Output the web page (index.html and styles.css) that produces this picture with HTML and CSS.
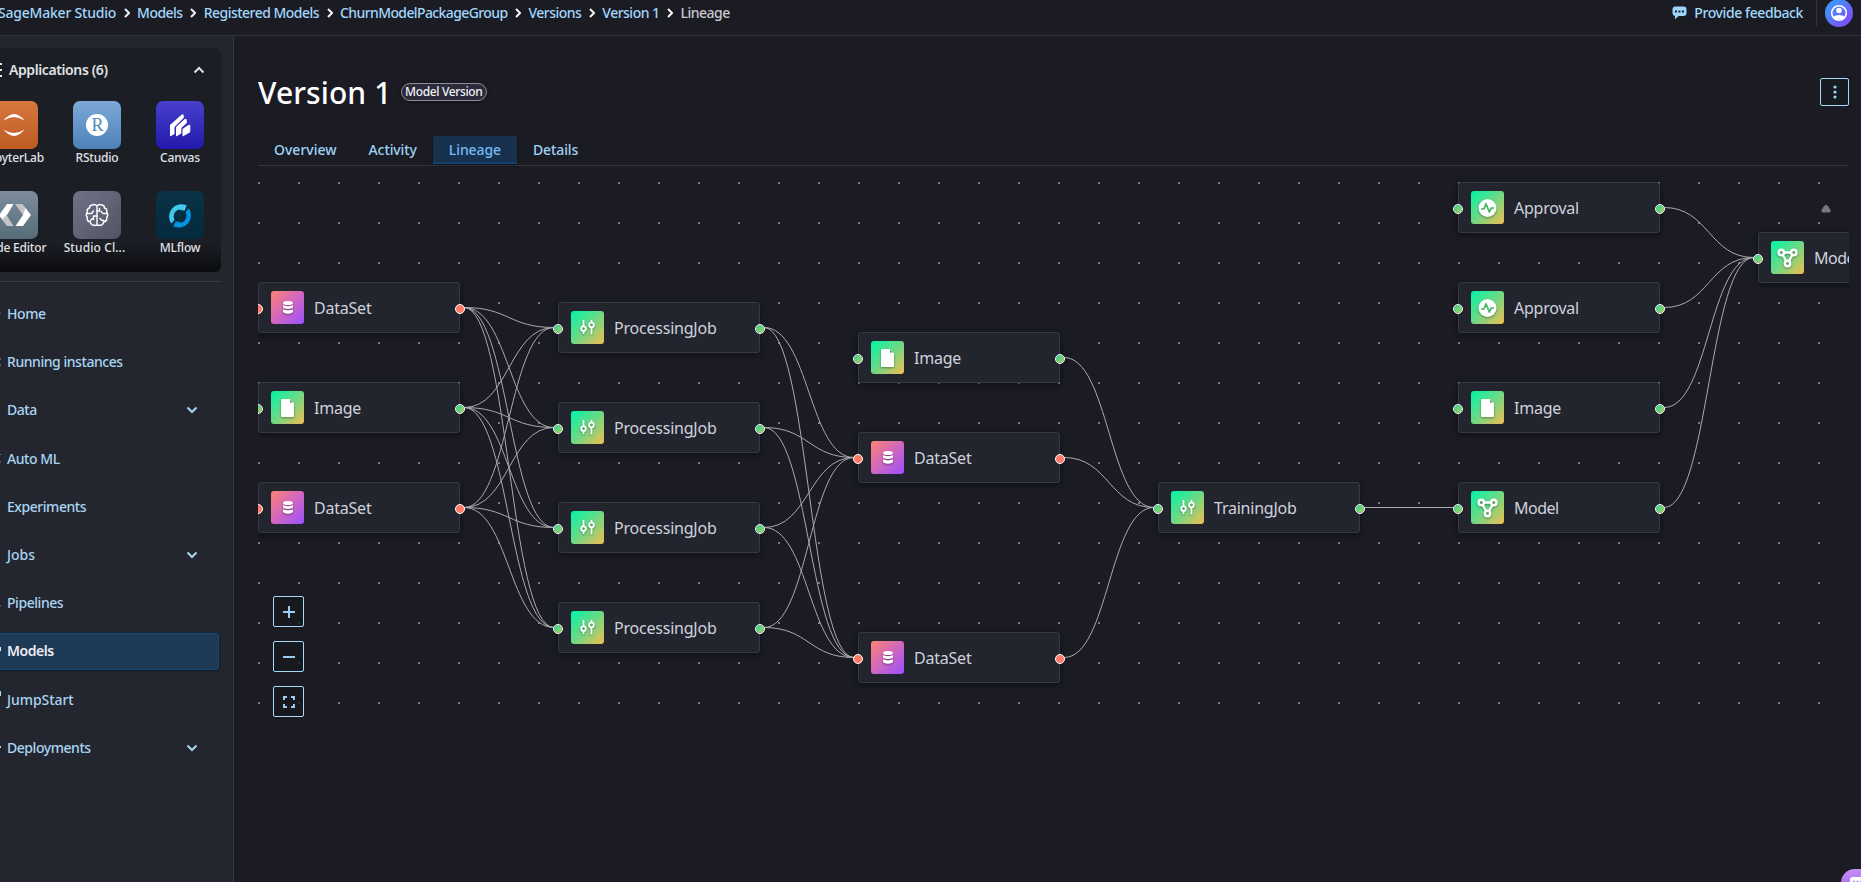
FILE: index.html
```html
<!DOCTYPE html>
<html lang="en">
<head>
<meta charset="utf-8">
<title>SageMaker Studio - Lineage</title>
<link rel="stylesheet" href="styles.css">
</head>
<body>
<svg class="defs" aria-hidden="true">
  <defs>
    <symbol id="chev-right" viewBox="0 0 6 10"><path d="M1 1l4 4-4 4" fill="none" stroke="currentColor" stroke-width="2"/></symbol>
    <symbol id="chev-down" viewBox="0 0 12 8"><path d="M1.5 1.5L6 6l4.500-4.500" fill="none" stroke="currentColor" stroke-width="2"/></symbol>
    <symbol id="i-job" viewBox="0 0 33 33"><g fill="none" stroke="#fff" stroke-width="1.800"><path d="M12.500 9v6M12.500 20.500V23M20.500 9v2.500M20.500 17v6.500"/><circle cx="12.500" cy="17.700" r="2.300"/><circle cx="20.500" cy="14" r="2.300"/></g></symbol>
    <symbol id="i-data" viewBox="0 0 33 33"><g fill="#fff"><ellipse cx="17" cy="12" rx="5" ry="2.100"/><path d="M12 14c1.500 1.500 8.500 1.500 10 0v2.300c-1 2.200-9 2.200-10 0zM12 18.300c1.500 1.500 8.500 1.500 10 0v2.400c-1 2.600-9 2.600-10 0z"/></g></symbol>
    <symbol id="i-image" viewBox="0 0 33 33"><path d="M11 8h7.800l4.200 4.200V25a1 1 0 0 1-1 1H11a1 1 0 0 1-1-1V9a1 1 0 0 1 1-1z" fill="#fff"/><path d="M19 9v2.500h2.500z" fill="#1e8a4c"/></symbol>
    <symbol id="i-approval" viewBox="0 0 33 33"><circle cx="16.500" cy="17" r="9" fill="#fff"/><path d="M10 18h3l2-5.300 3.300 8.300 2-4h2.700" fill="none" stroke="#45b862" stroke-width="1.700" stroke-linejoin="round"/></symbol>
    <symbol id="i-model" viewBox="0 0 33 33"><g fill="none" stroke="#fff" stroke-width="2.400"><circle cx="10.300" cy="11.500" r="2.700"/><circle cx="22.800" cy="11.500" r="2.700"/><circle cx="16.500" cy="22.500" r="2.700"/><path d="M13 11.500h7M11.700 14l3.500 6M21.400 14l-3.500 6"/></g></symbol>
  </defs>
</svg>

<header class="topbar">
  <nav class="crumbs">
    <a class="root">SageMaker Studio</a><svg class="sep"><use href="#chev-right"/></svg>
    <a>Models</a><svg class="sep"><use href="#chev-right"/></svg>
    <a>Registered Models</a><svg class="sep"><use href="#chev-right"/></svg>
    <a class="group">ChurnModelPackageGroup</a><svg class="sep"><use href="#chev-right"/></svg>
    <a>Versions</a><svg class="sep"><use href="#chev-right"/></svg>
    <a>Version 1</a><svg class="sep"><use href="#chev-right"/></svg>
    <span class="here">Lineage</span>
  </nav>
  <div class="feedback">
    <svg width="15" height="14" viewBox="0 0 15 14"><path d="M3.500.5h8a3 3 0 0 1 3 3V7a3 3 0 0 1-3 3H6.500L3 13.300V10A3 3 0 0 1 .5 7V3.500a3 3 0 0 1 3-3z" fill="#9bd6fb"/><g fill="#1a1b23"><rect x="3" y="4.500" width="2" height="2"/><rect x="6.500" y="4.500" width="2" height="2"/><rect x="10" y="4.500" width="2" height="2"/></g></svg>
    <span>Provide feedback</span>
  </div>
  <div class="avatar">
    <svg width="18" height="18" viewBox="0 0 18 18"><circle cx="9" cy="9" r="7.300" fill="none" stroke="#fff" stroke-width="1.600"/><circle cx="9" cy="6.500" r="2.800" fill="#fff"/><path d="M3.500 13.300c1.500-3 9.500-3 11 0l-2.500 2.200H6z" fill="#fff"/></svg>
  </div>
</header>

<div class="body">
  <aside class="sidebar">
    <section class="apps">
      <div class="apps-head">
        <svg class="list-dots" width="3" height="16" viewBox="0 0 3 16"><path d="M0 2h2M0 8h2M0 14h2" stroke="#e6e6ea" stroke-width="2"/></svg>
        <span>Applications (6)</span>
        <svg class="fold" width="12" height="8"><use href="#chev-down"/></svg>
      </div>
      <div class="tiles">
        <div class="app">
          <svg class="tile jupyter" viewBox="0 0 48 48"><path d="M13.500 19.500Q24 6.500 34.500 19.500 24 12.500 13.500 19.500zM13.500 28.500Q24 41.500 34.500 28.500 24 35.500 13.500 28.500z" fill="#fff"/></svg>
          <span>JupyterLab</span>
        </div>
        <div class="app">
          <svg class="tile rstudio" viewBox="0 0 48 48"><circle cx="24" cy="24" r="11" fill="#fff"/><text x="24.500" y="30" class="r-mark">R</text></svg>
          <span>RStudio</span>
        </div>
        <div class="app">
          <svg class="tile canvas-app" viewBox="0 0 48 48"><path d="M14 24l11-9.800q2.800-2.200 2.800 1v1.600L19.500 25q-1 1-1 2v6L15 35q-1 .5-1-.5zM20 27q0-1 1-2l7.200-6.500q2.600-1.700 2.600 1V22l-4.500 4q-1 1-1 2v4.500L21 35q-1 .5-1-.5zM26.500 29q0-1 1-1.700l4.800-3.300q2-1 2 1v5q0 1-1 1.700L27.500 35q-1 .5-1-.5z" fill="#fff"/></svg>
          <span>Canvas</span>
        </div>
        <div class="app">
          <svg class="tile code" viewBox="0 0 48 48"><path d="M23.500 13h-6.500L9 24l4 5.500 4-5.500z" fill="#fff"/><path d="M16.500 24l7 11H17l-5-6.500z" fill="#c4c4c8"/><path d="M25 13h7.500l5 6.500L33 24z" fill="#c4c4c8"/><path d="M35.500 17l5.500 7-8 11h-7.500l7.500-11z" fill="#fff"/></svg>
          <span>Code Editor</span>
        </div>
        <div class="app">
          <svg class="tile classic" viewBox="0 0 48 48"><g fill="none" stroke="#fff" stroke-width="1.400" stroke-linecap="round" stroke-linejoin="round"><path d="M24 15q-2-2.500-4.500-1-3 0-3 3-3.200 1-2.200 4.200-2 2.800 0 5.300-.5 4 3 4.500 1 4 4.500 3 1.500 1.200 2.200-.7zM24 15q2-2.500 4.500-1 3 0 3 3 3.200 1 2.200 4.200 2 2.800 0 5.300.5 4-3 4.500-1 4-4.500 3-1.500 1.200-2.200-.7"/><path d="M14.500 22.500h4l2-2.500M24 25h-3.500v3.500M17.500 29.500l2-2M33.500 22.500H30l-2-2M24 20h2.500v-2.500M27 27.500l2 2h2"/></g></svg>
          <span class="clipped-name">Studio Cl...</span>
        </div>
        <div class="app">
          <svg class="tile mlflow" viewBox="0 0 48 48"><path d="M15.200 32.500A12.300 12.300 0 0 1 30.300 14.300L31 13.800 28.500 19.800 22.500 18.400A7.500 7.500 0 0 0 18.500 29z" fill="#43c9ed"/><path d="M33 17.500A12.300 12.300 0 0 1 17.800 35.500L17 36 19.800 30.300 25.700 31.800A7.500 7.500 0 0 0 29.500 21z" fill="#0194e2"/></svg>
          <span>MLflow</span>
        </div>
      </div>
    </section>
    <nav class="menu">
      <a class="item"><svg class="frag" viewBox="0 0 2 16"><path d="M0 7h1" stroke="currentColor" opacity=".4"/></svg>Home</a>
      <a class="item"><svg class="frag" viewBox="0 0 2 16"><path d="M0 5h1M0 11h1" stroke="currentColor" opacity=".7"/></svg>Running instances</a>
      <a class="item">Data<svg class="fold"><use href="#chev-down"/></svg></a>
      <a class="item"><svg class="frag" viewBox="0 0 2 16"><path d="M0 4.500h1M0 12h1" stroke="currentColor" opacity=".5"/></svg>Auto ML</a>
      <a class="item">Experiments</a>
      <a class="item loose">Jobs<svg class="fold"><use href="#chev-down"/></svg></a>
      <a class="item"><svg class="frag" viewBox="0 0 2 16"><path d="M0 11h1" stroke="currentColor" opacity=".5"/></svg>Pipelines</a>
      <a class="item current"><svg class="frag" viewBox="0 0 2 16"><path d="M.5 3v4" stroke="currentColor"/></svg>Models</a>
      <a class="item loose"><svg class="frag" viewBox="0 0 2 16"><path d="M.5 0v5" stroke="currentColor"/></svg>JumpStart</a>
      <a class="item"><svg class="frag" viewBox="0 0 2 16"><path d="M0 8h1" stroke="currentColor" stroke-width="2"/></svg>Deployments<svg class="fold"><use href="#chev-down"/></svg></a>
    </nav>
  </aside>

  <main class="main">
    <div class="title-row">
      <h1>Version 1</h1>
      <span class="badge">Model Version</span>
      <button class="kebab" aria-label="Actions"><svg width="4" height="14" viewBox="0 0 4 14"><g fill="#9bd6fb"><circle cx="2" cy="2" r="1.600"/><circle cx="2" cy="7" r="1.600"/><circle cx="2" cy="12" r="1.600"/></g></svg></button>
    </div>
    <nav class="tabs">
      <a class="tab">Overview</a>
      <a class="tab">Activity</a>
      <a class="tab active">Lineage</a>
      <a class="tab">Details</a>
    </nav>

    <div class="graph">
      <svg class="layer" width="1591" height="560">
        <defs><pattern id="dots" width="40" height="40" y="16" patternUnits="userSpaceOnUse"><rect width="2" height="2" fill="#797a83"/></pattern></defs>
        <rect width="1591" height="560" fill="url(#dots)"/>
        <g class="edges">
          <path d="M206 141.500C251 141.500 251 161.500 296 161.500"/>
          <path d="M206 141.500C251 141.500 251 261.500 296 261.500"/>
          <path d="M206 141.500C251 141.500 251 361.500 296 361.500"/>
          <path d="M206 141.500C251 141.500 251 461.500 296 461.500"/>
          <path d="M206 241.500C251 241.500 251 161.500 296 161.500"/>
          <path d="M206 241.500C251 241.500 251 261.500 296 261.500"/>
          <path d="M206 241.500C251 241.500 251 361.500 296 361.500"/>
          <path d="M206 241.500C251 241.500 251 461.500 296 461.500"/>
          <path d="M206 341.500C251 341.500 251 161.500 296 161.500"/>
          <path d="M206 341.500C251 341.500 251 261.500 296 261.500"/>
          <path d="M206 341.500C251 341.500 251 361.500 296 361.500"/>
          <path d="M206 341.500C251 341.500 251 461.500 296 461.500"/>
          <path d="M506 161.500C551 161.500 551 291.500 596 291.500"/>
          <path d="M506 161.500C551 161.500 551 491.500 596 491.500"/>
          <path d="M506 261.500C551 261.500 551 291.500 596 291.500"/>
          <path d="M506 261.500C551 261.500 551 491.500 596 491.500"/>
          <path d="M506 361.500C551 361.500 551 291.500 596 291.500"/>
          <path d="M506 361.500C551 361.500 551 491.500 596 491.500"/>
          <path d="M506 461.500C551 461.500 551 291.500 596 291.500"/>
          <path d="M506 461.500C551 461.500 551 491.500 596 491.500"/>
          <path d="M806 191.500C851 191.500 851 341.500 896 341.500"/>
          <path d="M806 291.500C851 291.500 851 341.500 896 341.500"/>
          <path d="M806 491.500C851 491.500 851 341.500 896 341.500"/>
          <path d="M1106 341.500H1196"/>
          <path d="M1406 41.500C1451 41.500 1451 91.500 1496 91.500"/>
          <path d="M1406 141.500C1451 141.500 1451 91.500 1496 91.500"/>
          <path d="M1406 241.500C1451 241.500 1451 91.500 1496 91.500"/>
          <path d="M1406 341.500C1451 341.500 1451 91.500 1496 91.500"/>
        </g>
      </svg>

      <div class="node data" style="left:0;top:116px"><svg><use href="#i-data"/></svg>DataSet</div>
      <div class="node" style="left:0;top:216px"><svg><use href="#i-image"/></svg>Image</div>
      <div class="node data" style="left:0;top:316px"><svg><use href="#i-data"/></svg>DataSet</div>
      <div class="node" style="left:300px;top:136px"><svg><use href="#i-job"/></svg>ProcessingJob</div>
      <div class="node" style="left:300px;top:236px"><svg><use href="#i-job"/></svg>ProcessingJob</div>
      <div class="node" style="left:300px;top:336px"><svg><use href="#i-job"/></svg>ProcessingJob</div>
      <div class="node" style="left:300px;top:436px"><svg><use href="#i-job"/></svg>ProcessingJob</div>
      <div class="node" style="left:600px;top:166px"><svg><use href="#i-image"/></svg>Image</div>
      <div class="node data" style="left:600px;top:266px"><svg><use href="#i-data"/></svg>DataSet</div>
      <div class="node data" style="left:600px;top:466px"><svg><use href="#i-data"/></svg>DataSet</div>
      <div class="node" style="left:900px;top:316px"><svg><use href="#i-job"/></svg>TrainingJob</div>
      <div class="node" style="left:1200px;top:16px"><svg><use href="#i-approval"/></svg>Approval</div>
      <div class="node" style="left:1200px;top:116px"><svg><use href="#i-approval"/></svg>Approval</div>
      <div class="node" style="left:1200px;top:216px"><svg><use href="#i-image"/></svg>Image</div>
      <div class="node model" style="left:1200px;top:316px"><svg><use href="#i-model"/></svg>Model</div>
      <div class="node model" style="left:1500px;top:66px"><svg><use href="#i-model"/></svg>Model</div>

      <svg class="marker" width="10" height="8" viewBox="0 0 10 8"><path d="M4 .5h2L9 5v2H1V5z" fill="#77777c" stroke="#77777c" stroke-linejoin="round"/></svg>

      <div class="zoomer">
        <button aria-label="Zoom in"><svg viewBox="0 0 12 12"><path d="M6 0v12M0 6h12"/></svg></button>
        <button aria-label="Zoom out"><svg viewBox="0 0 12 12"><path d="M0 6h12"/></svg></button>
        <button aria-label="Fit view"><svg viewBox="0 0 12 12"><path d="M1 4V1h3M8 1h3v3M11 8v3H8M4 11H1V8"/></svg></button>
      </div>
    </div>
  </main>
</div>

<div class="assistant"><svg width="20" height="14" viewBox="0 0 20 14"><rect width="20" height="14" rx="3" fill="#fff"/><g fill="#b57ff0"><circle cx="4" cy="4.500" r="1"/><circle cx="7.500" cy="4.500" r="1"/><circle cx="11" cy="4.500" r="1"/></g></svg></div>
</body>
</html>
```
FILE: styles.css
```css
* { box-sizing: border-box; }
body {
  margin: 0;
  height: 882px;
  overflow: hidden;
  display: flex;
  flex-direction: column;
  background: #1b1b24;
  color: #d5d8de;
  font: 500 14px/20px "Noto Sans", "Open Sans", sans-serif;
}
.defs { position: absolute; width: 0; height: 0; }
svg { flex: none; display: block; }
button { font: inherit; padding: 0; }

.topbar {
  height: 36px;
  flex: none;
  display: flex;
  align-items: flex-start;
  border-bottom: 1px solid #33343e;
}
.crumbs {
  display: flex;
  align-items: center;
  gap: 7.5px;
  height: 26px;
  margin-left: -2px;
  flex: 1;
  color: #a0d6fa;
  letter-spacing: -.52px;
  white-space: nowrap;
}
.crumbs .root { letter-spacing: -.22px; }
.crumbs .group { letter-spacing: -.61px; }
.sep { width: 6px; height: 10px; color: #f2f3f3; }
.here { color: #c9c7cf; }
.feedback {
  display: flex;
  align-items: center;
  gap: 7px;
  height: 26px;
  color: #a0d8fc;
  letter-spacing: -.4px;
  padding-right: 13px;
  border-right: 1px solid #33343e;
}
.avatar {
  width: 28px;
  height: 28px;
  margin: -1px 8px 0;
  border-radius: 50%;
  background: linear-gradient(135deg, #2ea8ff, #8b3df5);
  display: flex;
  align-items: center;
  justify-content: center;
}

.body { flex: 1; display: flex; min-height: 0; }
.sidebar {
  width: 234px;
  flex: none;
  padding-top: 12px;
  background: #23262f;
  border-right: 1px solid #35373f;
}
.apps {
  width: 221px;
  height: 224px;
  overflow: hidden;
  border-radius: 0 6px 6px 0;
  background: linear-gradient(#0000 195px, #0b0c0f), #1b1e25;
  color: #e0e1e5;
}
.apps-head {
  display: flex;
  align-items: center;
  height: 44px;
  padding-right: 16px;
  font-weight: 600;
  letter-spacing: -.4px;
}
.list-dots { margin-right: 6px; }
.fold { width: 12px; height: 8px; margin-left: auto; }
.apps-head .fold { transform: rotate(180deg); }
.tiles {
  display: grid;
  grid-template-columns: repeat(3, 83px);
  grid-auto-rows: 90px;
  margin: 9px 0 0 -27.500px;
}
.app {
  display: flex;
  flex-direction: column;
  align-items: center;
  font-size: 12px;
  line-height: 18px;
  letter-spacing: -.2px;
}
.clipped-name { letter-spacing: .1px; margin-right: 5px; }
.tile { width: 48px; height: 48px; border-radius: 7px; }
.jupyter { background: linear-gradient(#d87640, #bf5c24); }
.rstudio { background: linear-gradient(#7ea8d8, #4c82b8); }
.canvas-app { background: linear-gradient(#4840cc, #2219ac); }
.code { background: linear-gradient(#7c8c9e, #576c77); }
.classic { background: linear-gradient(135deg, #70728a, #525462); }
.mlflow { background: linear-gradient(#093246, #042a3d); }
.r-mark { font: 18px "Liberation Serif", serif; fill: #5488bd; text-anchor: middle; }
.menu {
  display: flex;
  flex-direction: column;
  gap: 11.200px;
  width: 221px;
  margin-top: 9px;
  padding: 13.500px 2px 0 0;
  border-top: 1px solid #3a3c46;
}
.item {
  position: relative;
  display: flex;
  align-items: center;
  height: 37px;
  padding: 0 21px 0 7px;
  color: #a9d4f2;
  letter-spacing: -.45px;
}
.item.loose { letter-spacing: -.05px; }
.item.current {
  background: #1e3a57;
  border: 1px solid #144a7c;
  border-left: 0;
  border-radius: 0 4px 4px 0;
  box-shadow: 0 1px 3px #0006;
  color: #ececf2;
  font-weight: 600;
}
.frag { position: absolute; left: 0; top: 10px; width: 2px; height: 16px; }

.main { flex: 1; min-width: 0; padding: 42px 12px 0 24px; }
.title-row { display: flex; align-items: center; height: 28px; }
h1 { margin: 0; width: 130px; padding-top: 2px; font-size: 30px; line-height: 28px; font-weight: 500; letter-spacing: .1px; white-space: nowrap; color: #fff; }
.badge {
  height: 18px;
  margin-left: 13px;
  padding: 0 3px;
  border: 1px solid #8c8c99;
  border-radius: 9px;
  background: #2b2b3a;
  box-shadow: 0 1px 4px #0006;
  color: #f0f0f5;
  font-size: 12px;
  line-height: 16px;
  letter-spacing: -.35px;
}
.kebab {
  display: flex;
  align-items: center;
  justify-content: center;
  width: 29px;
  height: 28px;
  margin-left: auto;
  border: 1px solid #a5d9fa;
  border-radius: 2px;
  background: #191b22;
}
.tabs {
  display: flex;
  height: 30px;
  margin-top: 30px;
  border-bottom: 1px solid #33343e;
}
.tab { height: 28px; padding: 0 16px; line-height: 28px; color: #9fd3f8; }
.tab:nth-child(n+2) { letter-spacing: -.1px; }
.tab.active {
  background: #18314e;
  border-bottom: 2px solid #12436e;
  border-radius: 2px 2px 0 0;
  box-shadow: 0 1px 3px #0005;
  color: #75bcf5;
}

.graph { position: relative; height: 560px; overflow: hidden; }
.layer { position: absolute; left: 0; top: 0; }
.edges { fill: none; stroke: #a9a9ae; stroke-width: 1; }
.node {
  position: absolute;
  display: flex;
  align-items: center;
  gap: 10px;
  width: 202px;
  height: 51px;
  padding-left: 12px;
  background: #22252e;
  border: 1px solid #363945;
  border-radius: 3px;
  box-shadow: 0 2px 6px #0007;
  color: #d0d1dd;
  font-size: 16px;
  font-weight: 400;
  letter-spacing: -.22px;
}
.node.model { letter-spacing: -.5px; }
.node svg {
  width: 33px;
  height: 33px;
  border-radius: 3px;
  background: linear-gradient(135deg, #00f5a8, #6ed985 50%, #f2bd50);
}
.node.data svg { background: linear-gradient(135deg, #ff8270, #d067c0 50%, #9a50ff); }
.node use { filter: drop-shadow(0 1.500px 1px #0006); }
.node::before, .node::after {
  content: "";
  position: absolute;
  top: 20.500px;
  width: 8px;
  height: 8px;
  border: 1px solid #fff;
  border-radius: 50%;
  background: linear-gradient(135deg, #25d997, #b5c860) padding-box;
}
.node::before { left: -6px; }
.node::after { right: -6px; }
.node.data::before, .node.data::after { background: #ff7a68; }
.marker { position: absolute; left: 1563px; top: 39px; }
.zoomer { position: absolute; left: 15px; top: 430px; display: flex; flex-direction: column; gap: 13.700px; }
.zoomer button {
  display: flex;
  align-items: center;
  justify-content: center;
  width: 31px;
  height: 31.300px;
  border: 1px solid #a5d9fa;
  border-radius: 2px;
  background: #16191ecc;
}
.zoomer svg { width: 12px; height: 12px; fill: none; stroke: #9ccbef; stroke-width: 2; }

.assistant {
  position: absolute;
  left: 1841px;
  top: 869px;
  width: 40px;
  height: 40px;
  padding: 8px 0 0 9px;
  border-radius: 14px;
  background: linear-gradient(#c88df5, #8a50e8);
}
```
